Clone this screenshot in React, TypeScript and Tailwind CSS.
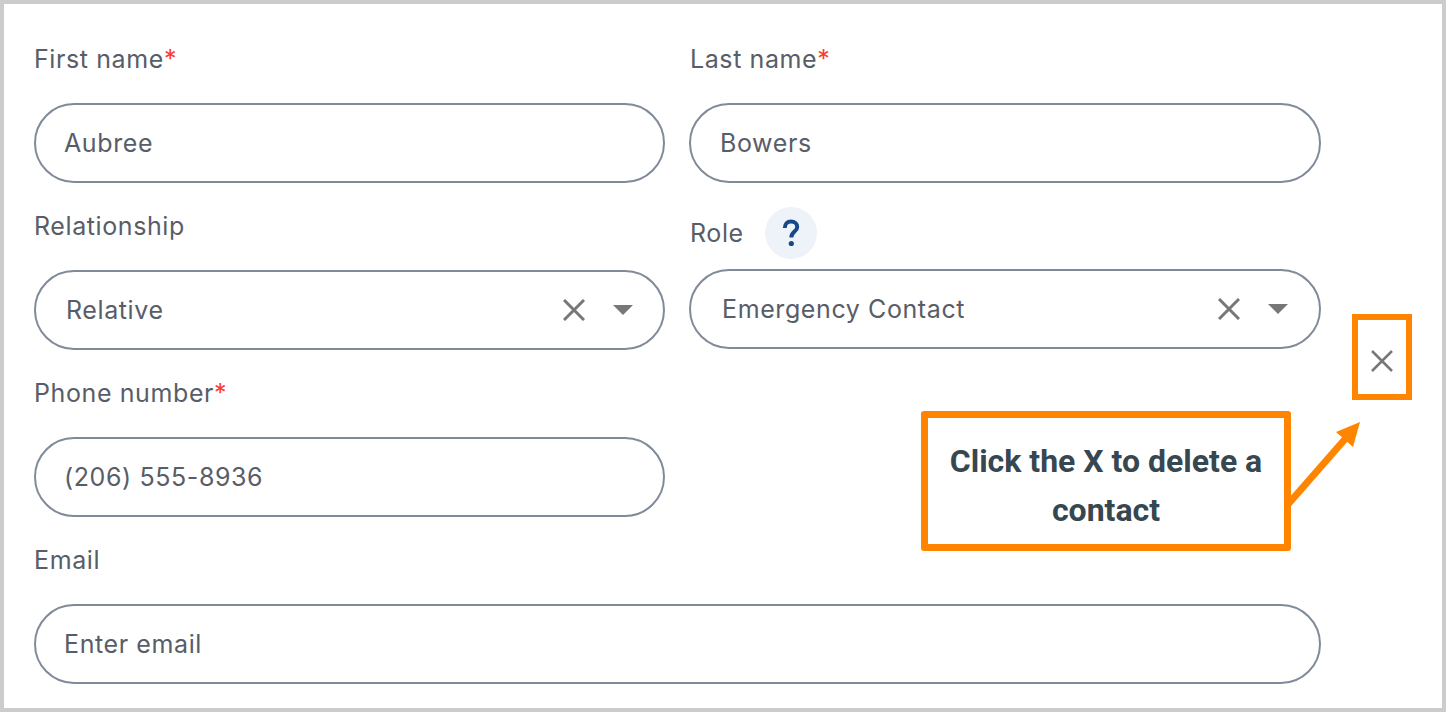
import React from "react";

const font = "[font-family:Inter,'Noto_Sans',sans-serif] tracking-[0.6px]";

function Label({ text, required, inset }: { text: string; required?: boolean; inset?: boolean }) {
  return (
    <label className={`block h-8 mb-7 text-[25px] leading-8 text-[#585d68] ${inset ? "pl-px" : ""} ${font}`}>
      {text}
      {required && <span className="text-[#ff3b30]">*</span>}
    </label>
  );
}

function Field({ value, inset }: { value: string; inset?: boolean }) {
  return (
    <div className={`flex items-center h-20 rounded-full border-2 border-[#808a99] ${inset ? "pl-[29px]" : "pl-[28px]"} pt-[2px] text-[25px] text-[#585d68] ${font}`}>
      {value}
    </div>
  );
}

function Cross({ size = 22, width = 3 }: { size?: number; width?: number }) {
  return (
    <svg width={size} height={size} viewBox="0 0 22 22" className="shrink-0">
      <path d="M1 1L21 21M21 1L1 21" stroke="#777777" strokeWidth={width} fill="none" />
    </svg>
  );
}

function Select({ value, inset }: { value: string; inset?: boolean }) {
  return (
    <div className={`flex items-center h-20 rounded-full border-2 border-[#808a99] ${inset ? "pl-[31px] pr-[31px]" : "pl-[30px] pr-[30px]"} text-[25px] text-[#585d68] ${font}`}>
      <span className="flex-1 pt-[2px]">{value}</span>
      <Cross />
      <svg width="20" height="10" viewBox="0 0 20 10" className="ml-[28px]">
        <path d="M0 0H20L10 10Z" fill="#777777" />
      </svg>
    </div>
  );
}

export default function App() {
  return (
    <div className="relative h-[712px] w-[1446px] overflow-hidden border-4 border-[#cccccc] bg-white pt-[39px] pl-[30px]">
      <div className="grid w-[1287px] grid-cols-[631px_632px] gap-x-6 gap-y-[27px]">
        <div>
          <Label text="First name" required />
          <Field value="Aubree" />
        </div>
        <div>
          <Label text="Last name" required inset />
          <Field value="Bowers" inset />
        </div>
        <div>
          <Label text="Relationship" />
          <Select value="Relative" />
        </div>
        <div className="-mt-[3px]">
          <div className={`flex h-[52px] mb-[10px] items-center pl-px text-[25px] text-[#585d68] ${font}`}>
            <span className="pt-[2px]">Role</span>
            <span className="ml-[21px] flex h-[52px] w-[52px] items-center justify-center rounded-full bg-[#eef3fa]">
              <svg width="18" height="28" viewBox="0 0 18 28">
                <path d="M2.8 9C2.8 4.8 5.5 2.6 9 2.6C12.5 2.6 15.2 4.8 15.2 8C15.2 12.6 9.3 12.6 9.3 18.5" stroke="#17498a" strokeWidth="4" fill="none" />
                <circle cx="9.3" cy="24.5" r="2.6" fill="#17498a" />
              </svg>
            </span>
          </div>
          <Select value="Emergency Contact" inset />
        </div>
        <div>
          <Label text="Phone number" required />
          <Field value="(206) 555-8936" />
        </div>
        <div />
        <div className="col-span-2">
          <Label text="Email" />
          <Field value="Enter email" />
        </div>
      </div>

      {/* annotation: highlighted delete button */}
      <div className="absolute left-[1348px] top-[310px] flex h-[86px] w-[60px] items-center justify-center border-[6px] border-[#ff8500] pt-[8px]">
        <Cross size={22} width={2.5} />
      </div>

      {/* annotation: arrow */}
      <svg width="90" height="110" viewBox="0 0 90 110" className="absolute left-[1276px] top-[414px]">
        <path d="M3 92L66 20" stroke="#ff8500" strokeWidth="7" fill="none" />
        <path d="M80 4L56 14L73 29Z" fill="#ff8500" />
      </svg>

      {/* annotation: callout */}
      <div className="absolute left-[917px] top-[407px] flex h-[140px] w-[370px] items-center justify-center rounded-[3px] border-[7px] border-[#ff8500] bg-white px-4 pt-[10px] text-center text-[32px] font-bold leading-[49px] text-[#37474f] [font-family:Roboto,sans-serif]">
        Click the X to delete a contact
      </div>
    </div>
  );
}
